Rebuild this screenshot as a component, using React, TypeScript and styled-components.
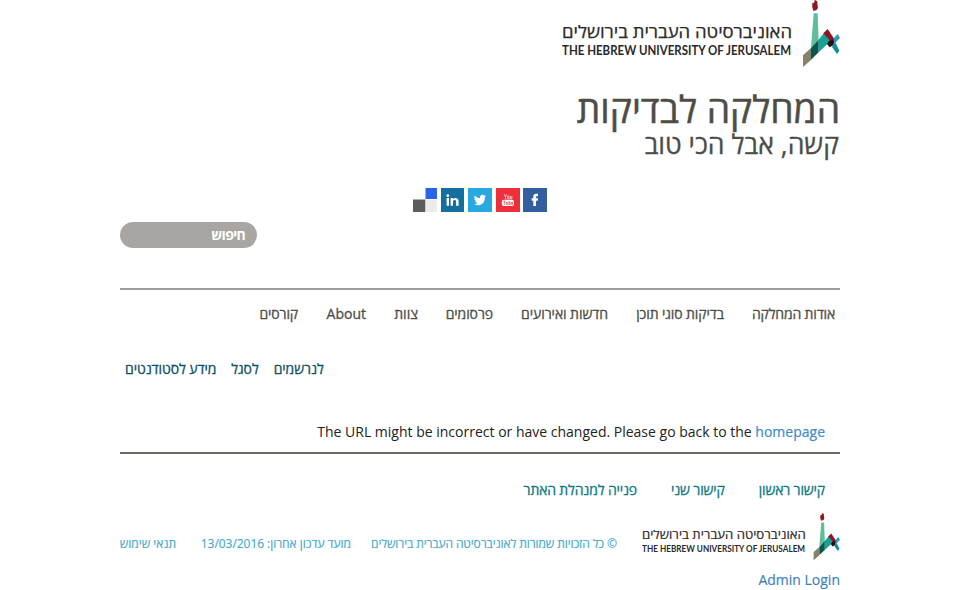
import React from 'react';
import styled, { createGlobalStyle } from 'styled-components';

const GlobalStyle = createGlobalStyle`
  * { box-sizing: border-box; }
  body { margin: 0; background: #fff; font-family: "Open Sans", "Noto Sans", sans-serif; font-size: 14px; overflow: hidden; }
  a { text-decoration: none; color: inherit; }
`;

const Page = styled.div`
  width: 720px;
  margin: 0 auto;
  direction: rtl;
  display: flex;
  flex-direction: column;
`;

const LogoSvg = styled.svg<{ $width: number; $height: number }>`
  display: block;
  flex: none;
  width: ${p => p.$width}px;
  height: ${p => p.$height}px;
  direction: ltr;
`;

const Title = styled.h1`
  margin: 20px 0 0;
  height: 41px;
  line-height: 41px;
  font-size: 37.2px;
  font-weight: 400;
  color: #4d4d48;
  white-space: nowrap;
  -webkit-text-stroke: 0.5px #4d4d48;
`;

const Subtitle = styled.h2`
  margin: 0;
  height: 30px;
  line-height: 30px;
  font-size: 26.6px;
  font-weight: 400;
  color: #4d4d48;
  white-space: nowrap;
  padding-right: 1px;
  -webkit-text-stroke: 0.3px #4d4d48;
`;

const SocialBar = styled.div`
  display: flex;
  justify-content: center;
  gap: 4px;
  height: 24px;
  margin-top: 29px;
`;

const SocialLink = styled.a<{ $width: number }>`
  width: ${p => p.$width}px;
  height: 24px;
  &:first-child { margin-left: -1px; }
  svg { display: block; width: 100%; height: 100%; }
`;

const Search = styled.div`
  align-self: flex-end;
  width: 137px;
  height: 26px;
  margin-top: 10px;
  padding: 0 12px;
  border-radius: 13px;
  background: #a9a5a2;
  color: #fff;
  font-weight: 700;
  line-height: 25px;
  letter-spacing: -0.7px;
`;

const MainNav = styled.nav`
  display: grid;
  grid-template-columns: 83px 88px 87px 47px 24px 40px 38px;
  column-gap: 28px;
  margin-top: 40px;
  height: 54px;
  padding: 13px 5px 0 0;
  border-top: 2px solid #a09e9c;
`;

const NavLink = styled.a<{ $tight?: number }>`
  color: #4d4d48;
  line-height: 22px;
  white-space: nowrap;
  letter-spacing: ${p => -(p.$tight ?? 0)}px;
  -webkit-text-stroke: 0.3px #4d4d48;
`;

const AudienceNav = styled.nav`
  display: flex;
  justify-content: flex-end;
  gap: 15px;
  height: 22px;
  margin-top: 16px;
  padding-left: 5px;
`;

const AudienceLink = styled.a`
  color: #0e5163;
  line-height: 22px;
  white-space: nowrap;
  letter-spacing: -0.08px;
  -webkit-text-stroke: 0.3px #0e5163;
`;

const Message = styled.p`
  margin: 41px 0 0;
  height: 33px;
  padding-right: 15px;
  direction: ltr;
  text-align: right;
  line-height: 22px;
  color: #222;
  border-bottom: 2px solid #6c6963;
  a { color: #428bca; -webkit-text-stroke: 0.2px #428bca; }
`;

const FooterNav = styled.nav`
  display: flex;
  gap: 34px;
  height: 22px;
  margin-top: 25px;
  padding-right: 15px;
`;

const FooterLink = styled.a`
  color: #0b7a83;
  line-height: 22px;
  white-space: nowrap;
  letter-spacing: -0.15px;
  -webkit-text-stroke: 0.3px #0b7a83;
`;

const FooterBar = styled.div`
  display: flex;
  height: 48px;
  margin-top: 12px;
`;

const Legal = styled.div`
  flex: 1;
  display: grid;
  grid-template-columns: 266px 175px 56px;
  padding: 21px 25px 0 0;
  color: #45a9cc;
  font-size: 12px;
  line-height: 20px;
  white-space: nowrap;
  -webkit-text-stroke: 0.15px #45a9cc;
`;

const LegalItem = styled.span<{ $tight: number }>`
  letter-spacing: ${p => -p.$tight}px;
`;

const AdminLogin = styled.a`
  && { color: #3a7fc0; }
  height: 22px;
  margin-top: 8px;
  line-height: 22px;
  direction: ltr;
  text-align: right;
  -webkit-text-stroke: 0.15px #3a7fc0;
`;

function Logo({ width, height }: { width: number; height: number }) {
  return (
    <LogoSvg $width={width} $height={height} viewBox="0 0 278 68" preserveAspectRatio="none">
      <text x="0" y="37.5" fontFamily='"Open Sans", sans-serif' fontSize="17" fontWeight="500" fill="#2b292a" stroke="#2b292a" strokeWidth=".25" textLength="230" lengthAdjust="spacingAndGlyphs">האוניברסיטה העברית בירושלים</text>
      <text x="0" y="54.7" fontFamily="Lato, sans-serif" fontSize="12.3" fontWeight="700" fill="#2b292a" textLength="229" lengthAdjust="spacingAndGlyphs">THE HEBREW UNIVERSITY OF JERUSALEM</text>
      <g transform="translate(233 0) scale(.3333)">
        <path d="M56 40H68L71 120L48 144Z" fill="#5fbd9b" />
        <path d="M52 8Q59 13 59 0Q70 3 67 11L69 24Q64 34 55 32Q50 23 52 8Z" fill="#8c1721" />
        <path d="M24 166L48 144V180L24 201Z" fill="#85836b" />
        <path d="M48 144L71 119V157L48 179Z" fill="#075750" />
        <path d="M71 119L87 99L106 124L71 157Z" fill="#15a293" />
        <path d="M85 100L98 87L118 117L106 124Z" fill="#8c1721" />
        <path d="M102 122L118 116L116 135L104 142L96 132Z" fill="#300b15" />
        <path d="M115 116L128 102L135 114L118 131Z" fill="#2999bd" />
        <path d="M114 135L121 127L133 152L126 162L111 141Z" fill="#138d99" />
      </g>
    </LogoSvg>
  );
}

export default function App() {
  return (
    <>
      <GlobalStyle />
      <Page>
        <Logo width={278} height={68} />
        <Title>המחלקה לבדיקות</Title>
        <Subtitle>קשה, אבל הכי טוב</Subtitle>
        <SocialBar>
          <SocialLink $width={24}>
            <svg viewBox="0 0 24 24">
              <rect width="24" height="24" fill="#345f9f" />
              <path d="M10.3 18V12.8H8.7V10.2H10.3V8.9C10.3 6.8 11.4 5.8 13.2 5.8H15V8.3H14C13.2 8.3 13 8.6 13 9.3V10.2H15L14.7 12.8H13V18Z" fill="#fff" />
            </svg>
          </SocialLink>
          <SocialLink $width={24}>
            <svg viewBox="0 0 24 24">
              <rect width="24" height="24" fill="#ed2f3a" />
              <path d="M8.3 6.3L9.5 9V11M10.7 6.3L9.5 9M11.7 8V10.7H13V8H11.7M14.5 8V10.7H15.9V7.8" fill="none" stroke="#fff" strokeWidth=".65" />
              <rect x="5.8" y="11.8" width="12.2" height="6.2" rx="2" fill="#fff" />
              <path d="M7.3 13.2H9.5M8.4 13.2V16.8M10.4 14V16.5H11.7V14M13 13V16.5H14.2V14.3H13M17 15.4H15.6V14.3H16.7V15.4M15.6 15.4V16.5H17" fill="none" stroke="#ed2f3a" strokeWidth=".65" />
            </svg>
          </SocialLink>
          <SocialLink $width={24}>
            <svg viewBox="0 0 24 24">
              <rect width="24" height="24" fill="#29a9e1" />
              <path d="M18 8.2L16.8 9.4C17 14 13.8 17.2 10 17.2C8.4 17.2 7.1 16.8 6 16.1C7.5 16.2 8.7 15.8 9.7 15C8.5 14.9 7.7 14.2 7.3 13.2H8.3C7 12.8 6.3 11.8 6.3 10.6L7.4 10.9C6.2 9.8 6.1 8.6 6.7 7.4C8.1 9 9.8 9.9 12 10C11.7 8.1 12.8 6.8 14.3 6.8C15 6.8 15.6 7.1 16.1 7.6L17.6 7L16.7 8.4Z" fill="#fff" />
            </svg>
          </SocialLink>
          <SocialLink $width={23}>
            <svg viewBox="0 0 23 24">
              <rect width="23" height="24" fill="#146f9f" />
              <path d="M5.6 10H8V17.8H5.6ZM9.6 10H11.9V11.1C13.1 9.3 17.6 9.2 17.6 13.1V17.8H15.1V13.5C15.1 11.3 12 11.4 12 13.5V17.8H9.6Z" fill="#fff" />
              <circle cx="6.8" cy="7.7" r="1.4" fill="#fff" />
            </svg>
          </SocialLink>
          <SocialLink $width={24}>
            <svg viewBox="0 0 24 24">
              <rect x="12.5" width="11.5" height="11" fill="#2764e8" />
              <rect y="11.5" width="12.5" height="12.5" fill="#5c5c5c" />
              <rect x="12.5" y="12" width="11.5" height="12" fill="#ebebeb" />
            </svg>
          </SocialLink>
        </SocialBar>
        <Search>חיפוש</Search>
        <MainNav>
          <NavLink $tight={0.17}>אודות המחלקה</NavLink>
          <NavLink $tight={0.1}>בדיקות סוגי תוכן</NavLink>
          <NavLink $tight={0.06}>חדשות ואירועים</NavLink>
          <NavLink $tight={0.1}>פרסומים</NavLink>
          <NavLink>צוות</NavLink>
          <NavLink>About</NavLink>
          <NavLink $tight={0.15}>קורסים</NavLink>
        </MainNav>
        <AudienceNav>
          <AudienceLink>לנרשמים</AudienceLink>
          <AudienceLink>לסגל</AudienceLink>
          <AudienceLink>מידע לסטודנטים</AudienceLink>
        </AudienceNav>
        <Message>
          The URL might be incorrect or have changed. Please go back to the <a>homepage</a>
        </Message>
        <FooterNav>
          <FooterLink>קישור ראשון</FooterLink>
          <FooterLink>קישור שני</FooterLink>
          <FooterLink>פנייה למנהלת האתר</FooterLink>
        </FooterNav>
        <FooterBar>
          <Logo width={198} height={48} />
          <Legal>
            <LegalItem $tight={0.1}>© כל הזכויות שמורות לאוניברסיטה העברית בירושלים</LegalItem>
            <LegalItem $tight={0.04}>מועד עדכון אחרון: 13/03/2016</LegalItem>
            <LegalItem $tight={0}>תנאי שימוש</LegalItem>
          </Legal>
        </FooterBar>
        <AdminLogin>Admin Login</AdminLogin>
      </Page>
    </>
  );
}
